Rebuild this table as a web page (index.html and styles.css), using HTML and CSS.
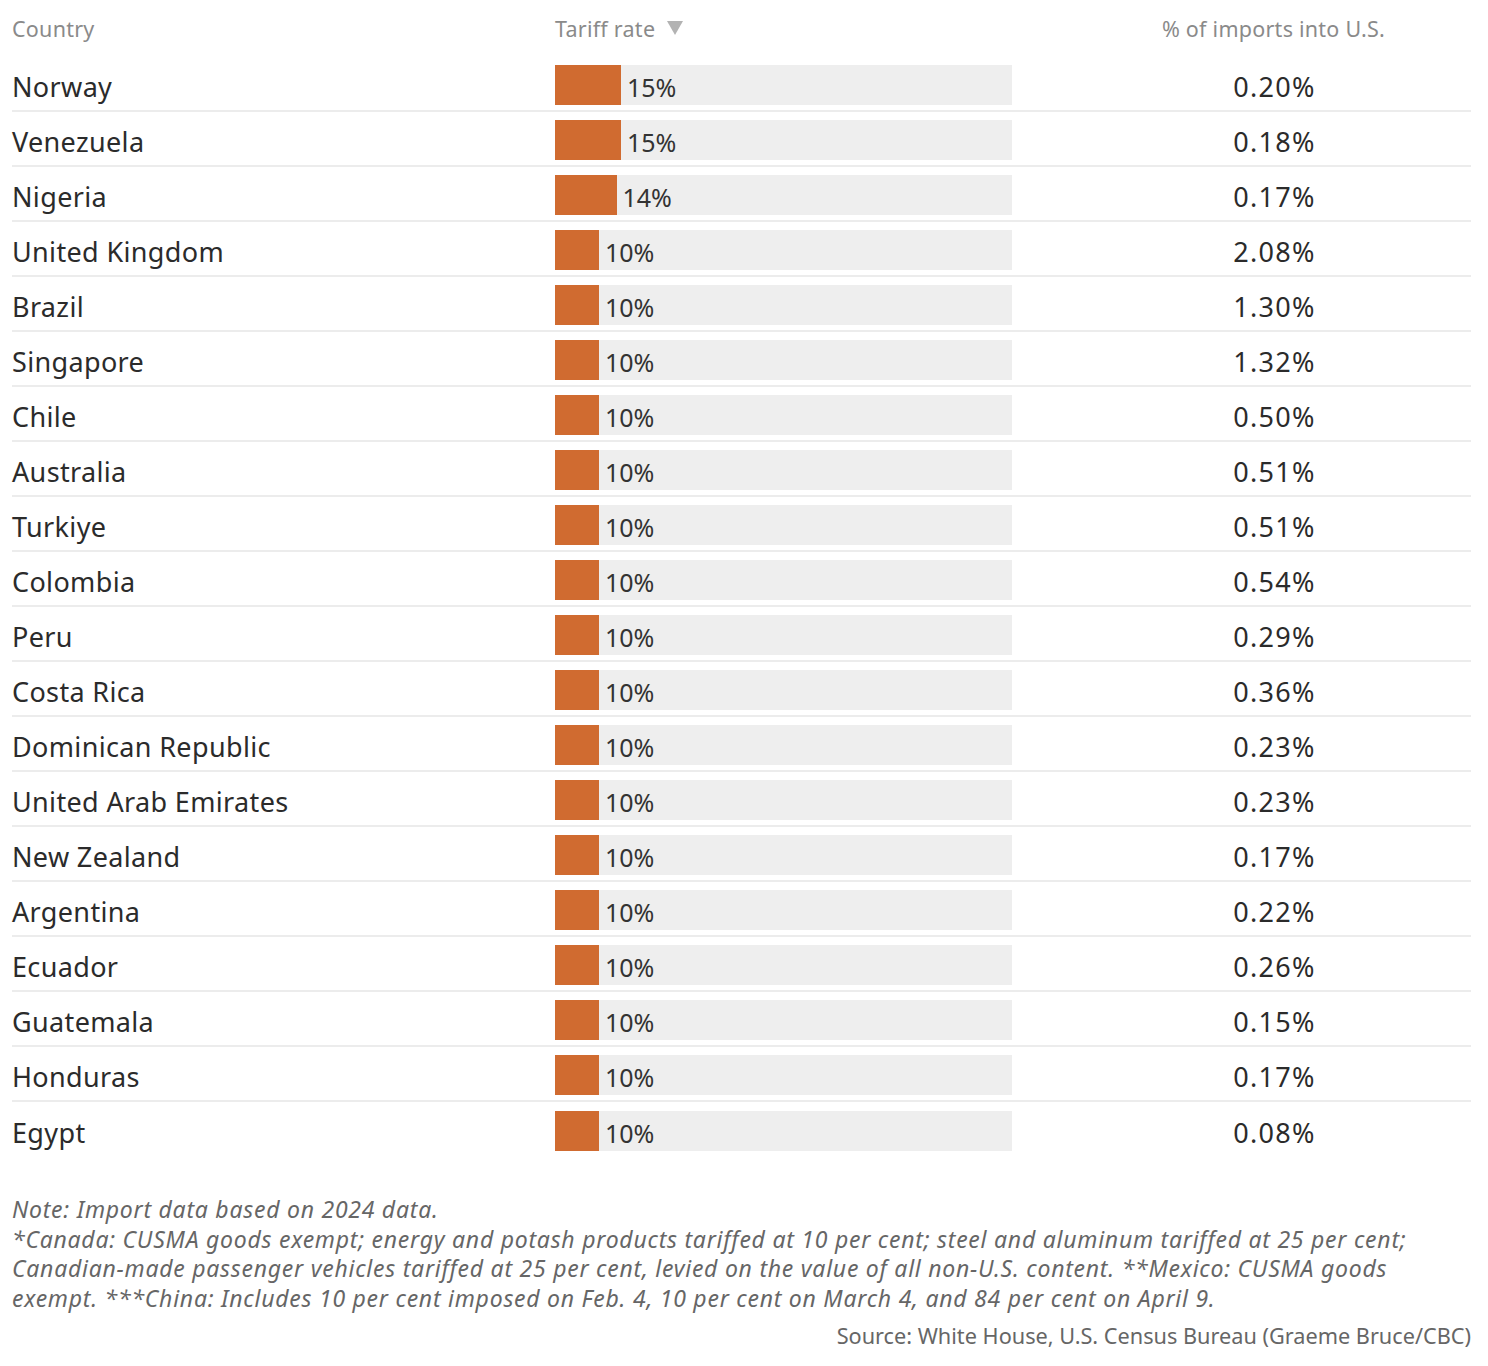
FILE: index.html
```html
<!DOCTYPE html>
<html lang="en">
<head>
<meta charset="utf-8">
<title>Tariff rates</title>
<link rel="stylesheet" href="styles.css">
</head>
<body>
<div class="chart">
  <div class="head">
    <div class="h-country">Country</div>
    <div class="h-rate">Tariff rate <svg class="sort" width="16" height="14" viewBox="0 0 16 14"><polygon points="0,0 16,0 8,14" fill="#b3b3b3"/></svg></div>
    <div class="h-share">% of imports into U.S.</div>
  </div>
  <div class="rows">
    <div class="row"><div class="country">Norway</div><div class="track"><div class="fill" style="width:65.9px"></div><span class="lbl">15%</span></div><div class="share">0.20%</div></div>
    <div class="row"><div class="country">Venezuela</div><div class="track"><div class="fill" style="width:65.9px"></div><span class="lbl">15%</span></div><div class="share">0.18%</div></div>
    <div class="row"><div class="country">Nigeria</div><div class="track"><div class="fill" style="width:61.5px"></div><span class="lbl">14%</span></div><div class="share">0.17%</div></div>
    <div class="row"><div class="country">United Kingdom</div><div class="track"><div class="fill" style="width:44px"></div><span class="lbl">10%</span></div><div class="share">2.08%</div></div>
    <div class="row"><div class="country">Brazil</div><div class="track"><div class="fill" style="width:44px"></div><span class="lbl">10%</span></div><div class="share">1.30%</div></div>
    <div class="row"><div class="country">Singapore</div><div class="track"><div class="fill" style="width:44px"></div><span class="lbl">10%</span></div><div class="share">1.32%</div></div>
    <div class="row"><div class="country">Chile</div><div class="track"><div class="fill" style="width:44px"></div><span class="lbl">10%</span></div><div class="share">0.50%</div></div>
    <div class="row"><div class="country">Australia</div><div class="track"><div class="fill" style="width:44px"></div><span class="lbl">10%</span></div><div class="share">0.51%</div></div>
    <div class="row"><div class="country">Turkiye</div><div class="track"><div class="fill" style="width:44px"></div><span class="lbl">10%</span></div><div class="share">0.51%</div></div>
    <div class="row"><div class="country">Colombia</div><div class="track"><div class="fill" style="width:44px"></div><span class="lbl">10%</span></div><div class="share">0.54%</div></div>
    <div class="row"><div class="country">Peru</div><div class="track"><div class="fill" style="width:44px"></div><span class="lbl">10%</span></div><div class="share">0.29%</div></div>
    <div class="row"><div class="country">Costa Rica</div><div class="track"><div class="fill" style="width:44px"></div><span class="lbl">10%</span></div><div class="share">0.36%</div></div>
    <div class="row"><div class="country">Dominican Republic</div><div class="track"><div class="fill" style="width:44px"></div><span class="lbl">10%</span></div><div class="share">0.23%</div></div>
    <div class="row"><div class="country">United Arab Emirates</div><div class="track"><div class="fill" style="width:44px"></div><span class="lbl">10%</span></div><div class="share">0.23%</div></div>
    <div class="row"><div class="country">New Zealand</div><div class="track"><div class="fill" style="width:44px"></div><span class="lbl">10%</span></div><div class="share">0.17%</div></div>
    <div class="row"><div class="country">Argentina</div><div class="track"><div class="fill" style="width:44px"></div><span class="lbl">10%</span></div><div class="share">0.22%</div></div>
    <div class="row"><div class="country">Ecuador</div><div class="track"><div class="fill" style="width:44px"></div><span class="lbl">10%</span></div><div class="share">0.26%</div></div>
    <div class="row"><div class="country">Guatemala</div><div class="track"><div class="fill" style="width:44px"></div><span class="lbl">10%</span></div><div class="share">0.15%</div></div>
    <div class="row"><div class="country">Honduras</div><div class="track"><div class="fill" style="width:44px"></div><span class="lbl">10%</span></div><div class="share">0.17%</div></div>
    <div class="row last"><div class="country">Egypt</div><div class="track"><div class="fill" style="width:44px"></div><span class="lbl">10%</span></div><div class="share">0.08%</div></div>
  </div>
  <div class="notes">
    <p>Note: Import data based on 2024 data.</p>
    <p>*Canada: CUSMA goods exempt; energy and potash products tariffed at 10 per cent; steel and aluminum tariffed at 25 per cent; Canadian-made passenger vehicles tariffed at 25 per cent, levied on the value of all non-U.S. content. **Mexico: CUSMA goods exempt. ***China: Includes 10 per cent imposed on Feb. 4, 10 per cent on March 4, and 84 per cent on April 9.</p>
  </div>
  <div class="source">Source: White House, U.S. Census Bureau (Graeme Bruce/CBC)</div>
</div>
</body>
</html>
```
FILE: styles.css
```css
* { box-sizing: border-box; }
html, body { margin: 0; padding: 0; background: #fff; }
body { font-family: "Noto Sans", "Open Sans", sans-serif; color: #333; }

.chart { margin-left: 12px; width: 1459px; }

.head {
  display: grid;
  grid-template-columns: 543px 457px 1fr;
  height: 57px;
  align-items: center;
  font-size: 21.5px;
  letter-spacing: 0.25px;
  color: #8a8a8a;
}
.h-rate { display: flex; align-items: center; gap: 12px; }
.sort { display: block; margin-top: -2px; }
.h-share { text-align: center; padding-left: 64px; }

.row {
  display: grid;
  grid-template-columns: 543px 457px 1fr;
  height: 55px;
  padding: 8px 0 5px;
  border-bottom: 2px solid #ececec;
  align-items: center;
}
.row.last { border-bottom: none; }

.country { font-size: 27px; letter-spacing: 0.35px; color: #2b2b2b; padding-top: 3px; }
.track {
  height: 40px;
  background: #eeeeee;
  display: flex;
  align-items: center;
}
.fill { height: 40px; background: #d06b30; flex: none; }
.lbl { font-size: 25px; color: #333; padding-left: 6px; padding-top: 4px; }
.share { font-size: 27px; letter-spacing: 1.3px; color: #2b2b2b; text-align: center; padding-left: 66px; padding-top: 3px; }

.notes {
  margin-top: 38px;
  font-style: italic;
  font-size: 23px;
  letter-spacing: 0.75px;
  line-height: 29.5px;
  color: #666;
  padding-right: 39px;
}
.notes p { margin: 0; }
.source {
  margin-top: 8px;
  text-align: right;
  font-size: 21.7px;
  line-height: 29.5px;
  color: #666;
}
```
